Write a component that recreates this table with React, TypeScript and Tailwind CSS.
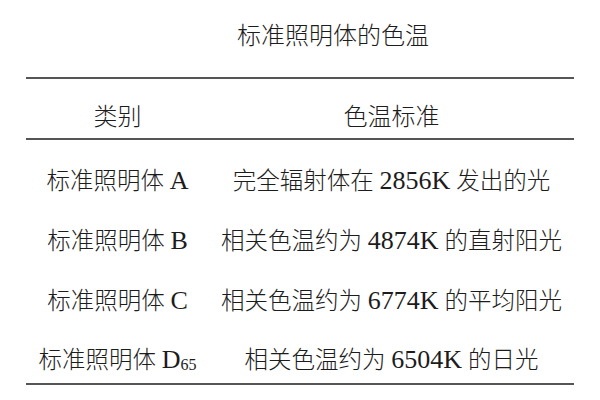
import React from "react";

function Mixed({ text }: { text: string }) {
  const parts = text.split(/([A-Za-z0-9]+)/).filter((p) => p.length > 0);
  return (
    <>
      {parts.map((p, i) =>
        /^[A-Za-z0-9]+$/.test(p) ? (
          <span key={i} className="text-[26px]">
            {p}
          </span>
        ) : (
          <span key={i}>{p}</span>
        )
      )}
    </>
  );
}

const rows: { left: React.ReactNode; right: string }[] = [
  { left: <Mixed text="标准照明体 A" />, right: "完全辐射体在 2856K 发出的光" },
  { left: <Mixed text="标准照明体 B" />, right: "相关色温约为 4874K 的直射阳光" },
  { left: <Mixed text="标准照明体 C" />, right: "相关色温约为 6774K 的平均阳光" },
  {
    left: (
      <>
        <Mixed text="标准照明体 D" />
        <sub className="text-[16px] -bottom-[2px]">65</sub>
      </>
    ),
    right: "相关色温约为 6504K 的日光",
  },
];

export default function App() {
  return (
    <div
      className="w-[600px] h-[400px] bg-white text-[#1c1c1c] overflow-hidden font-light"
      style={{ fontFamily: '"Liberation Serif", "Noto Sans CJK SC", serif' }}
    >
      <div className="h-[77px] flex items-center justify-center pl-[66px] pb-[6px] text-[24px] leading-none">
        标准照明体的色温
      </div>
      <div className="mx-[26px] border-t-2 border-b-2 border-[#555]">
        <div className="grid grid-cols-[183px_1fr] h-[61px] pt-[16px] items-center text-[24px] leading-none border-b-2 border-[#555]">
          <div className="text-center">类别</div>
          <div className="text-center">色温标准</div>
        </div>
        <div className="pt-[11px]">
          {rows.map((r, i) => (
            <div
              key={i}
              className={
                i === rows.length - 1
                  ? "grid grid-cols-[183px_1fr] h-[52px] pt-[6px] items-center text-[23.5px] leading-none"
                  : "grid grid-cols-[183px_1fr] h-[60px] items-center text-[23.5px] leading-none"
              }
            >
              <div className="text-center whitespace-nowrap">{r.left}</div>
              <div className="text-center whitespace-nowrap">
                <Mixed text={r.right} />
              </div>
            </div>
          ))}
        </div>
      </div>
    </div>
  );
}
